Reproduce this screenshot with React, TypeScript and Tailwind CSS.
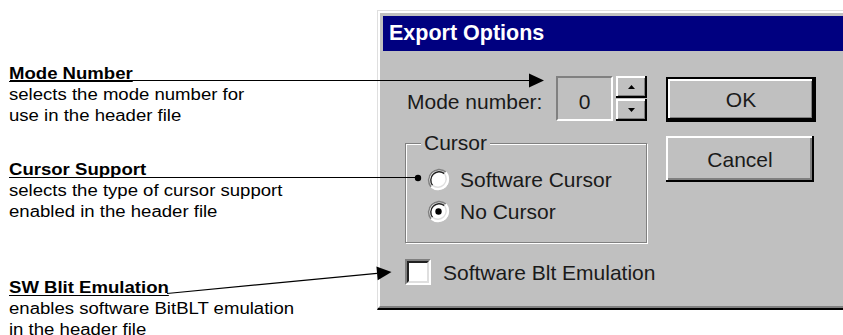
import React from 'react';

const sans = "font-['Liberation_Sans',Arial,sans-serif]";

// sunken round radio button, win95 style
function Radio({ checked }: { checked?: boolean }) {
  return (
    <svg width="23" height="23" viewBox="0 0 23 23" className="shrink-0">
      <circle cx="11.5" cy="11.5" r="10.5" fill="#fff" />
      <path d="M 4.1 18.9 A 10.5 10.5 0 0 1 18.9 4.1" stroke="#808080" strokeWidth="1.6" fill="none" />
      <path d="M 5.6 17.4 A 8.4 8.4 0 0 1 17.4 5.6" stroke="#222" strokeWidth="1.4" fill="none" />
      <path d="M 18.9 4.1 A 10.5 10.5 0 0 1 4.1 18.9" stroke="#fff" strokeWidth="1.6" fill="none" />
      <path d="M 17.4 5.6 A 8.4 8.4 0 0 1 5.6 17.4" stroke="#dfdfdf" strokeWidth="1.4" fill="none" />
      {checked && <circle cx="11.5" cy="11.5" r="3.2" fill="#000" />}
    </svg>
  );
}

function SpinButton({ up }: { up?: boolean }) {
  return (
    <div className="h-[22px] flex items-center justify-center bg-[#c0c0c0] shadow-[inset_-2px_-2px_0_#000,inset_2px_2px_0_#fff,inset_-3px_-3px_0_#808080]">
      <svg width="7" height="4" viewBox="0 0 7 4">
        <polygon points={up ? '0,4 3.5,0 7,4' : '0,0 3.5,4 7,0'} fill="#000" />
      </svg>
    </div>
  );
}

function Note({ title, lines, className }: { title: string; lines: string[]; className: string }) {
  return (
    <div className={`origin-left scale-x-[1.16] ${className}`}>
      <div className="font-bold underline underline-offset-[2px]">{title}</div>
      {lines.map((l) => (
        <div key={l}>{l}</div>
      ))}
    </div>
  );
}

export default function App() {
  return (
    <div className={`relative flex w-[843px] h-[335px] overflow-hidden bg-white text-black ${sans}`}>
      {/* annotations */}
      <div className="w-[377px] shrink-0 pl-[9px] text-[16px] leading-[21px]">
        <Note className="mt-[63px]" title="Mode Number" lines={['selects the mode number for', 'use in the header file']} />
        <Note
          className="mt-[33px]"
          title="Cursor Support"
          lines={['selects the type of cursor support', 'enabled in the header file']}
        />
        <Note
          className="mt-[55px]"
          title="SW Blit Emulation"
          lines={['enables software BitBLT emulation', 'in the header file']}
        />
      </div>

      {/* dialog */}
      <div className="mt-[10px] h-[300px] flex-1 border-l border-t border-[#dfdfdf] border-b-2 border-b-black">
        <div className="h-full flex flex-col border-l-2 border-t-2 border-white border-b-2 border-b-[#808080] bg-[#c0c0c0] pl-[3px] pt-[3px]">
          <div className="h-[35px] shrink-0 flex items-center bg-[#000080] pl-[6px] text-[21.5px] font-bold text-white">
            Export Options
          </div>

          <div className="flex pl-[22px] text-[21px] leading-[21px] text-[#1a1a1a] whitespace-nowrap">
            <div className="w-[242px] shrink-0 flex flex-col">
              <div className="mt-[25px] h-[45px] flex">
                <span className="ml-[2px] w-[149px] mt-[15px]">Mode number:</span>
                <div className="w-[57px] h-[45px] flex justify-center pt-[13px] border-2 border-t-[#808080] border-l-[#808080] border-b-white border-r-white">
                  0
                </div>
                <div className="ml-[3px] w-[31px] flex flex-col gap-[1px]">
                  <SpinButton up />
                  <SpinButton />
                </div>
              </div>

              <div className="relative mt-[22px] h-[100px] border border-[#808080] shadow-[inset_1px_1px_0_#fff,1px_1px_0_#fff]">
                <span className="absolute -top-[12px] left-[15px] px-[3px] bg-[#c0c0c0]">Cursor</span>
                <div className="pt-[24px] pl-[21px] flex flex-col gap-[9px]">
                  <div className="flex items-center gap-[10px]">
                    <Radio />
                    <span>Software Cursor</span>
                  </div>
                  <div className="flex items-center gap-[10px]">
                    <Radio checked />
                    <span>No Cursor</span>
                  </div>
                </div>
              </div>

              <div className="mt-[16px] flex items-center gap-[12px]">
                <div className="w-[26px] h-[26px] shrink-0 border-2 border-t-[#808080] border-l-[#808080] border-b-white border-r-white">
                  <div className="w-full h-full bg-white border-2 border-t-[#222] border-l-[#222] border-b-[#dfdfdf] border-r-[#dfdfdf]" />
                </div>
                <span>Software Blt Emulation</span>
              </div>
            </div>

            <div className="ml-[19px] flex flex-col">
              <div className="mt-[26px] w-[150px] h-[45px] border-2 border-black">
                <div className="h-full flex items-center justify-center shadow-[inset_-2px_-2px_0_#000,inset_2px_2px_0_#fff,inset_-3px_-3px_0_#808080]">
                  OK
                </div>
              </div>
              <div className="mt-[14px] w-[148px] h-[46px] flex items-center justify-center shadow-[inset_-2px_-2px_0_#000,inset_2px_2px_0_#fff,inset_-4px_-4px_0_#808080]">
                Cancel
              </div>
            </div>
          </div>
        </div>
      </div>

      {/* leader lines */}
      <svg className="absolute inset-0 pointer-events-none" width="843" height="335" viewBox="0 0 843 335">
        <line x1="10" y1="80.5" x2="530" y2="80.5" stroke="#000" strokeWidth="1.2" />
        <polygon points="529,73.5 544,80.5 529,87.5" fill="#000" />
        <line x1="10" y1="177.5" x2="418" y2="177.5" stroke="#000" strokeWidth="1.2" />
        <circle cx="418" cy="178" r="3.2" fill="#000" />
        <line x1="167" y1="293.5" x2="377" y2="273.3" stroke="#000" strokeWidth="1.2" />
        <polygon points="376.4,266.4 391.5,272 377.7,280.3" fill="#000" />
      </svg>
    </div>
  );
}
